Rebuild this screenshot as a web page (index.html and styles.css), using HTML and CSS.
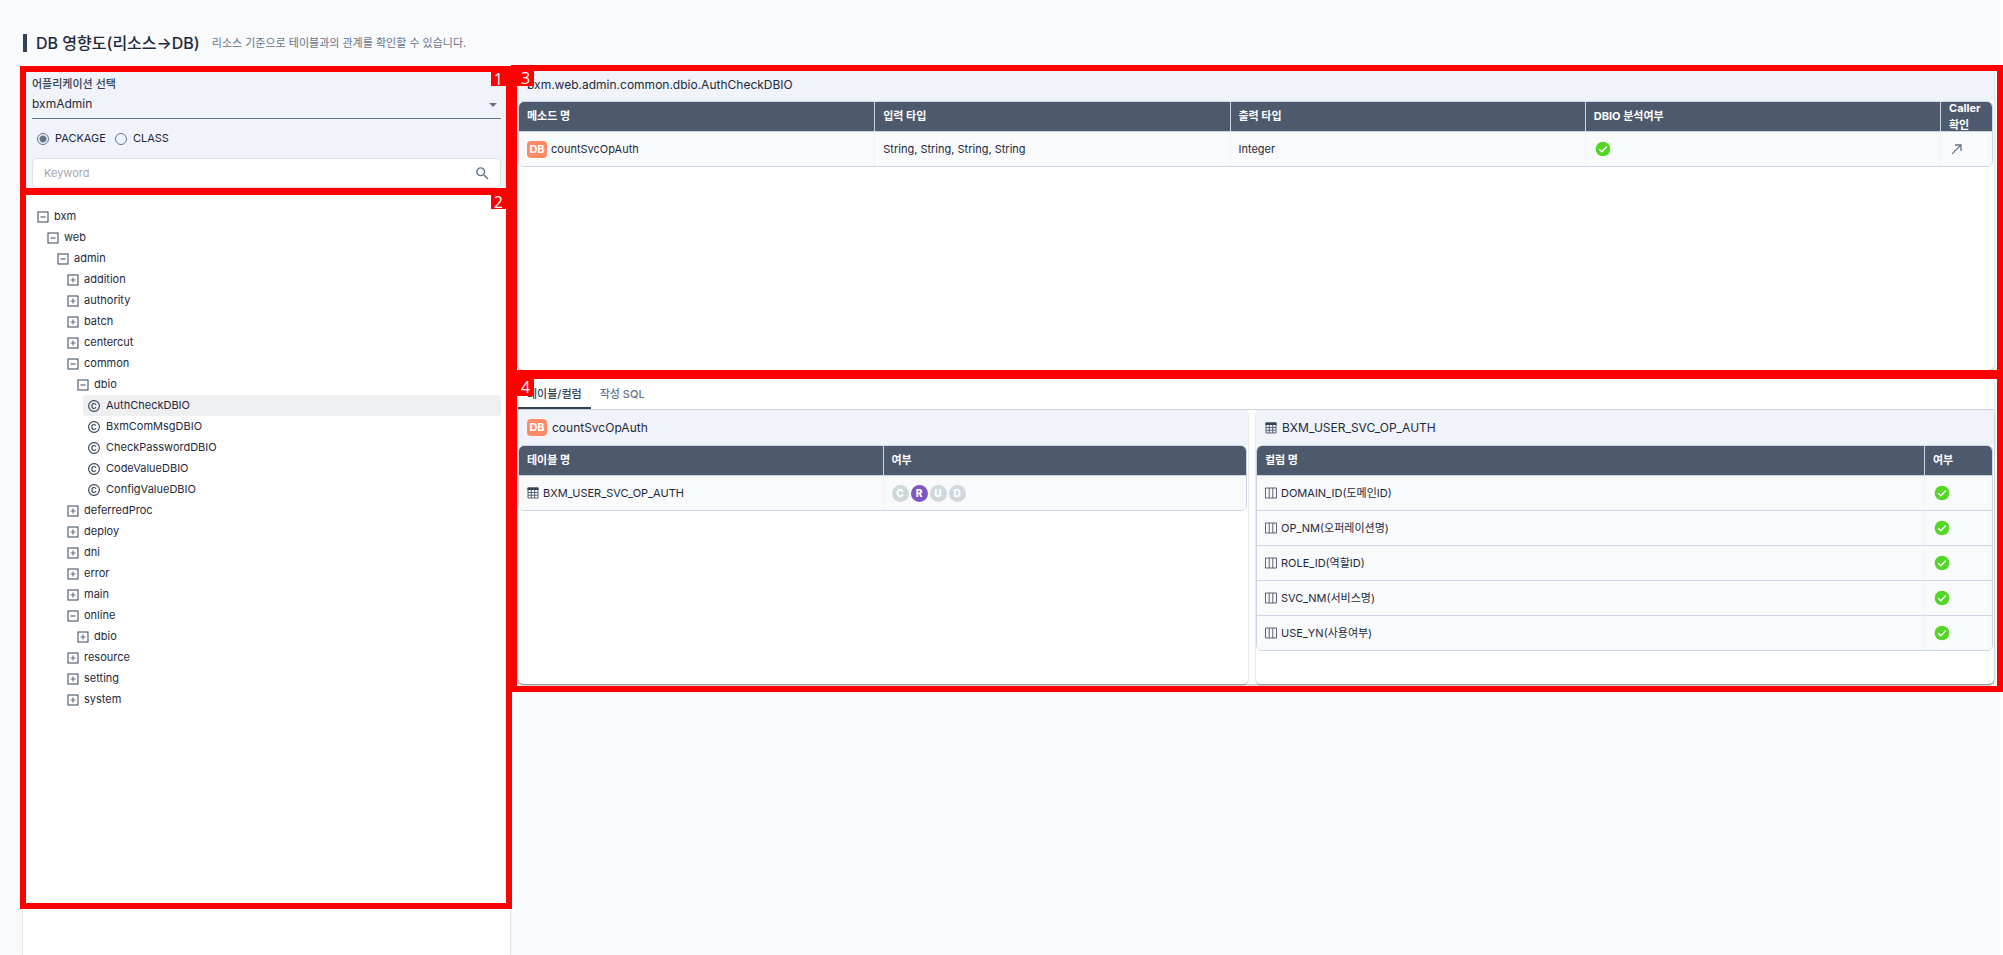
FILE: index.html
```html
<!DOCTYPE html>
<html lang="ko">
<head>
<meta charset="utf-8">
<title>DB 영향도(리소스→DB)</title>
<link rel="stylesheet" href="styles.css">
</head>
<body>
<svg class="defs" aria-hidden="true">
  <symbol id="i-minus" viewBox="0 0 12 12"><rect x="1" y="1" width="10" height="10" fill="none" stroke="#475467" stroke-width="1.1"/><path d="M3.5 6h5" stroke="#475467" stroke-width="1.1"/></symbol>
  <symbol id="i-plus" viewBox="0 0 12 12"><rect x="1" y="1" width="10" height="10" fill="none" stroke="#475467" stroke-width="1.1"/><path d="M3.5 6h5M6 3.5v5" stroke="#667085" stroke-width="1.2"/></symbol>
  <symbol id="i-class" viewBox="0 0 12 12"><circle cx="6" cy="6" r="5.4" fill="none" stroke="#334155" stroke-width="1.1"/><path d="M7.9 4.9C7.6 4 6.900 3.500 6 3.500 4.700 3.500 3.900 4.500 3.900 6S4.700 8.500 6 8.500c.9 0 1.600-.5 1.900-1.400" fill="none" stroke="#334155" stroke-width="1.100"/></symbol>
  <symbol id="i-check" viewBox="0 0 24 24"><circle cx="12" cy="12" r="9.800" fill="#52d726"/><path d="M7 12.300l3.400 3.400L17.200 8.700" fill="none" stroke="#fff" stroke-width="1.900"/></symbol>
  <symbol id="i-table" viewBox="0 0 12 12"><path d="M1 1h10v10H1zM1 5.500h10M1 8.200h10M4.300 3v8M7.700 3v8" fill="none" stroke="#475467" stroke-width=".9"/><path d="M.5.5h11v2.500H.5z" fill="#334155"/></symbol>
  <symbol id="i-cols" viewBox="0 0 12 12"><path d="M.5 1h11v10H.5zM4.200 1v10M7.800 1v10" fill="none" stroke="#475467" stroke-width=".9"/></symbol>
  <symbol id="i-open" viewBox="0 0 24 24"><path fill="#64748b" d="M9 5v2h6.590L4 18.590 5.410 20 17 8.410V15h2V5z"/></symbol>
</svg>

<header class="page-head">
  <h1>DB 영향도(리소스→DB)</h1>
  <p>리소스 기준으로 테이블과의 관계를 확인할 수 있습니다.</p>
</header>

<main class="layout">
  <aside class="card side">
    <section class="filter">
      <label class="field-label" for="app">어플리케이션 선택</label>
      <div class="select-wrap">
        <select id="app"><option>bxmAdmin</option></select>
        <svg class="caret" viewBox="0 0 8 4"><path d="M0 0h8L4 4z" fill="#64748b"/></svg>
      </div>
      <div class="radios">
        <label><input type="radio" name="kind" checked>PACKAGE</label>
        <label><input type="radio" name="kind">CLASS</label>
      </div>
      <div class="search">
        <input type="text" placeholder="Keyword" aria-label="Keyword">
        <button type="button" aria-label="검색"><svg viewBox="0 0 24 24"><path fill="#64748b" d="M15.500 14h-.79l-.28-.27A6.470 6.470 0 0 0 16 9.500 6.500 6.500 0 1 0 9.500 16c1.610 0 3.090-.59 4.230-1.570l.27.28v.79l5 4.990L20.490 19l-4.990-5zm-6 0C7.010 14 5 11.990 5 9.500S7.010 5 9.500 5 14 7.010 14 9.500 11.990 14 9.500 14z"/></svg></button>
      </div>
      <div class="mark mark-1"><span>1</span></div>
    </section>
    <section class="tree-box">
      <ul class="tree">
        <li><div class="node"><svg><use href="#i-minus"/></svg>bxm</div>
          <ul>
            <li><div class="node"><svg><use href="#i-minus"/></svg>web</div>
              <ul>
                <li><div class="node"><svg><use href="#i-minus"/></svg>admin</div>
                  <ul>
                    <li><div class="node"><svg><use href="#i-plus"/></svg>addition</div></li>
                    <li><div class="node"><svg><use href="#i-plus"/></svg>authority</div></li>
                    <li><div class="node"><svg><use href="#i-plus"/></svg>batch</div></li>
                    <li><div class="node"><svg><use href="#i-plus"/></svg>centercut</div></li>
                    <li><div class="node"><svg><use href="#i-minus"/></svg>common</div>
                      <ul>
                        <li><div class="node"><svg><use href="#i-minus"/></svg>dbio</div>
                          <ul>
                            <li><div class="node leaf selected"><svg><use href="#i-class"/></svg>AuthCheckDBIO</div></li>
                            <li><div class="node leaf"><svg><use href="#i-class"/></svg>BxmComMsgDBIO</div></li>
                            <li><div class="node leaf"><svg><use href="#i-class"/></svg>CheckPasswordDBIO</div></li>
                            <li><div class="node leaf"><svg><use href="#i-class"/></svg>CodeValueDBIO</div></li>
                            <li><div class="node leaf"><svg><use href="#i-class"/></svg>ConfigValueDBIO</div></li>
                          </ul>
                        </li>
                      </ul>
                    </li>
                    <li><div class="node"><svg><use href="#i-plus"/></svg>deferredProc</div></li>
                    <li><div class="node"><svg><use href="#i-plus"/></svg>deploy</div></li>
                    <li><div class="node"><svg><use href="#i-plus"/></svg>dni</div></li>
                    <li><div class="node"><svg><use href="#i-plus"/></svg>error</div></li>
                    <li><div class="node"><svg><use href="#i-plus"/></svg>main</div></li>
                    <li><div class="node"><svg><use href="#i-minus"/></svg>online</div>
                      <ul>
                        <li><div class="node"><svg><use href="#i-plus"/></svg>dbio</div></li>
                      </ul>
                    </li>
                    <li><div class="node"><svg><use href="#i-plus"/></svg>resource</div></li>
                    <li><div class="node"><svg><use href="#i-plus"/></svg>setting</div></li>
                    <li><div class="node"><svg><use href="#i-plus"/></svg>system</div></li>
                  </ul>
                </li>
              </ul>
            </li>
          </ul>
        </li>
      </ul>
      <div class="mark mark-2"><span>2</span></div>
    </section>
  </aside>

  <div class="content">
    <section class="card methods">
      <h2 class="panel-title">bxm.web.admin.common.dbio.AuthCheckDBIO</h2>
      <table>
        <colgroup><col><col><col><col><col class="c-caller"></colgroup>
        <thead><tr><th><div>메소드 명</div></th><th><div>입력 타입</div></th><th><div>출력 타입</div></th><th><div>DBIO 분석여부</div></th><th><div>Caller 확인</div></th></tr></thead>
        <tbody><tr>
          <td><div><span class="badge">DB</span>countSvcOpAuth</div></td>
          <td><div>String, String, String, String</div></td>
          <td><div>Integer</div></td>
          <td><div><svg class="check"><use href="#i-check"/></svg></div></td>
          <td><div><button class="open" type="button" aria-label="Caller 확인"><svg><use href="#i-open"/></svg></button></div></td>
        </tr></tbody>
      </table>
      <div class="mark mark-3"><span>3</span></div>
    </section>

    <section class="card details">
      <div class="tabs" role="tablist">
        <button type="button" role="tab" aria-selected="true">테이블/컬럼</button>
        <button type="button" role="tab" aria-selected="false">작성 SQL</button>
      </div>
      <div class="panels">
        <section class="panel">
          <h2 class="panel-title"><span class="badge">DB</span>countSvcOpAuth</h2>
          <table>
            <thead><tr><th><div>테이블 명</div></th><th><div>여부</div></th></tr></thead>
            <tbody><tr>
              <td><div><svg class="ico"><use href="#i-table"/></svg>BXM_USER_SVC_OP_AUTH</div></td>
              <td><div class="crud"><span>C</span><span class="on">R</span><span>U</span><span>D</span></div></td>
            </tr></tbody>
          </table>
        </section>
        <section class="panel">
          <h2 class="panel-title"><svg class="ico"><use href="#i-table"/></svg>BXM_USER_SVC_OP_AUTH</h2>
          <table>
            <colgroup><col><col class="c-flag"></colgroup>
            <thead><tr><th><div>컬럼 명</div></th><th><div>여부</div></th></tr></thead>
            <tbody>
              <tr><td><div><svg class="ico"><use href="#i-cols"/></svg>DOMAIN_ID(도메인ID)</div></td><td><div><svg class="check"><use href="#i-check"/></svg></div></td></tr>
              <tr><td><div><svg class="ico"><use href="#i-cols"/></svg>OP_NM(오퍼레이션명)</div></td><td><div><svg class="check"><use href="#i-check"/></svg></div></td></tr>
              <tr><td><div><svg class="ico"><use href="#i-cols"/></svg>ROLE_ID(역할ID)</div></td><td><div><svg class="check"><use href="#i-check"/></svg></div></td></tr>
              <tr><td><div><svg class="ico"><use href="#i-cols"/></svg>SVC_NM(서비스명)</div></td><td><div><svg class="check"><use href="#i-check"/></svg></div></td></tr>
              <tr><td><div><svg class="ico"><use href="#i-cols"/></svg>USE_YN(사용여부)</div></td><td><div><svg class="check"><use href="#i-check"/></svg></div></td></tr>
            </tbody>
          </table>
        </section>
      </div>
      <div class="mark mark-4"><span>4</span></div>
    </section>
  </div>
</main>
</body>
</html>
```

FILE: styles.css
```css
* { box-sizing: border-box; }

html { overflow: hidden; }

body {
  margin: 0;
  height: 100vh;
  display: flex;
  flex-direction: column;
  padding: 0 9px 0 23px;
  background: linear-gradient(to left, #fff 3px, #f9fafc 3px);
  color: #1e293b;
  font: 12px/17px Inter, "Noto Sans CJK KR", sans-serif;
}

h1, h2, p, ul { margin: 0; padding: 0; }
ul { list-style: none; }
button, input, select { font: inherit; color: inherit; margin: 0; }
button { border: 0; padding: 0; background: none; cursor: pointer; }
svg { flex: none; }
.defs { position: absolute; width: 0; height: 0; }

/* Page heading */
.page-head {
  display: flex;
  align-items: center;
  gap: 12px;
  padding: 32px 0 14px;
}
.page-head h1 {
  display: flex;
  align-items: center;
  gap: 9px;
  font: 500 16px/22px Inter, "Noto Sans CJK KR", sans-serif;
}
.page-head h1::before {
  content: "";
  width: 4px;
  height: 18px;
  background: #334155;
}
.page-head p { font-size: 11px; color: #64748b; }

/* Main layout */
.layout {
  flex: 1;
  min-height: 0;
  display: grid;
  grid-template-columns: 487fr 1476fr;
  gap: 8px;
}
.card {
  position: relative;
  background: #fff;
  border-radius: 5px;
  box-shadow: 0 1px 2px rgba(0, 0, 0, .3);
}

/* Left side */
.side {
  display: flex;
  flex-direction: column;
  padding-bottom: 49px;
  border-bottom-left-radius: 0;
  border-bottom-right-radius: 0;
}
.filter {
  position: relative;
  padding: 8px 9px 4px;
  background: #f0f3f9;
}
.field-label {
  display: block;
  font-size: 11px;
  font-weight: 500;
  color: #334155;
}
.select-wrap { position: relative; }
.select-wrap select {
  display: block;
  width: 100%;
  height: 26px;
  padding: 0 0 4px;
  border: 0;
  border-bottom: 1px solid #64748b;
  background: none;
  appearance: none;
}
.caret {
  position: absolute;
  right: 4px;
  top: 10px;
  width: 8px;
  height: 4px;
}
.radios {
  display: flex;
  gap: 9px;
  padding: 11px 5px 11px;
}
.radios label {
  display: flex;
  align-items: center;
  gap: 6px;
  font-size: 11px;
}
.radios input {
  appearance: none;
  width: 12px;
  height: 12px;
  border: 1px solid #64748b;
  border-radius: 50%;
}
.radios input:checked {
  background: radial-gradient(circle, #64748b 3px, transparent 4px);
}
.search {
  display: flex;
  align-items: center;
  height: 30px;
  padding: 0 9px 0 11px;
  border: 1px solid #dbe2ec;
  border-radius: 5px;
  background: #fff;
}
.search input {
  flex: 1;
  min-width: 0;
  padding: 0;
  border: 0;
  outline: 0;
  background: none;
  font-size: 11px;
}
.search input::placeholder { color: #a3a9b3; }
.search button { display: flex; }
.search svg { width: 17px; height: 17px; }

.tree-box {
  position: relative;
  flex: 1;
  padding: 14px 9px 0 10px;
}
.tree ul { padding-left: 10px; }
.node {
  display: flex;
  align-items: center;
  gap: 5px;
  height: 21px;
  padding-left: 4px;
  border-radius: 4px;
  font-size: 11px;
}
.node svg { width: 12px; height: 12px; }
.leaf { gap: 6px; padding-left: 5px; }
.selected { background: #eeeff1; }

/* Right side */
.content {
  display: flex;
  flex-direction: column;
  gap: 8px;
  min-width: 0;
}
.methods { min-height: 302px; padding-right: 1px; }
.panel-title {
  display: flex;
  align-items: center;
  gap: 5px;
  height: 35px;
  padding: 0 9px;
  background: #f0f3f9;
  font-size: 12px;
  font-weight: 400;
  color: #1e293b;
}
.methods .panel-title { height: 33px; margin-right: -1px; }

table {
  width: 100%;
  table-layout: fixed;
  border-spacing: 0;
  border: 1px solid #cbd5e4;
  border-radius: 6px;
  overflow: hidden;
  font-size: 11px;
}
.c-caller { width: 52px; }
.c-flag { width: 68px; }
th, td { padding: 0 8px; text-align: left; }
th {
  background: #4d596c;
  color: #fff;
  font-weight: 700;
}
th + th { border-left: 1px solid #cbd5e1; }
th div {
  display: flex;
  align-items: center;
  height: 29px;
  line-height: 17px;
}
td {
  background: #f9fafc;
  border-top: 1px solid #cbd5e4;
}
td + td { border-left: 1px solid #eff2f7; }
td div {
  display: flex;
  align-items: center;
  gap: 4px;
  height: 34px;
}
.badge {
  width: 20px;
  border-radius: 4px;
  background: #ff8a65;
  color: #fff;
  text-align: center;
  font-size: 11px;
  font-weight: 700;
}
.check { width: 18px; height: 18px; }
.ico { width: 12px; height: 12px; }
.open { display: flex; }
.open svg { width: 16px; height: 16px; }
td .crud { gap: 2px; }
.crud span {
  width: 17px;
  height: 17px;
  border-radius: 50%;
  background: #cfd8dc;
  color: #fff;
  text-align: center;
  font-size: 10px;
  font-weight: 800;
}
.crud .on { background: #7e57c2; }

/* Tabs and detail panels */
.details { display: flex; flex-direction: column; }
.tabs {
  display: flex;
  height: 32px;
  border-bottom: 1px solid #cbd5e4;
}
.tabs button {
  padding: 4px 9px 0;
  border-bottom: 2px solid transparent;
  font-size: 11px;
  font-weight: 500;
  color: #64748b;
}
.tabs [aria-selected="true"] {
  border-color: #334155;
  color: #334155;
}
.panels {
  display: grid;
  grid-template-columns: 730fr 738fr;
  gap: 8px;
}
.panel {
  min-height: 274px;
  padding-right: 1px;
  border-radius: 5px;
  box-shadow: 0 1px 2px rgba(0, 0, 0, .3);
}
.panel .panel-title { margin-right: -1px; }

/* Numbered region marks */
.mark {
  position: absolute;
  z-index: 1;
  border: 6px solid #f00;
  pointer-events: none;
}
.mark span {
  position: absolute;
  top: 0;
  padding: 0 4px;
  background: #f00;
  color: #fff;
  font: 16px/15px "Open Sans", sans-serif;
}
.mark-1 { inset: -2px -2px -2px -3px; }
.mark-2 { inset: -3px -2px -3px -3px; }
.mark-1 span, .mark-2 span { right: 0; padding: 0 3px; line-height: 14px; }
.mark-3 { inset: -3px -9px -6px -7px; z-index: 2; }
.mark-4 { inset: -5px -9px -8px -7px; z-index: 2; }
.mark-3 span, .mark-4 span { left: 0; }
.mark-4 span { line-height: 17px; }
```
